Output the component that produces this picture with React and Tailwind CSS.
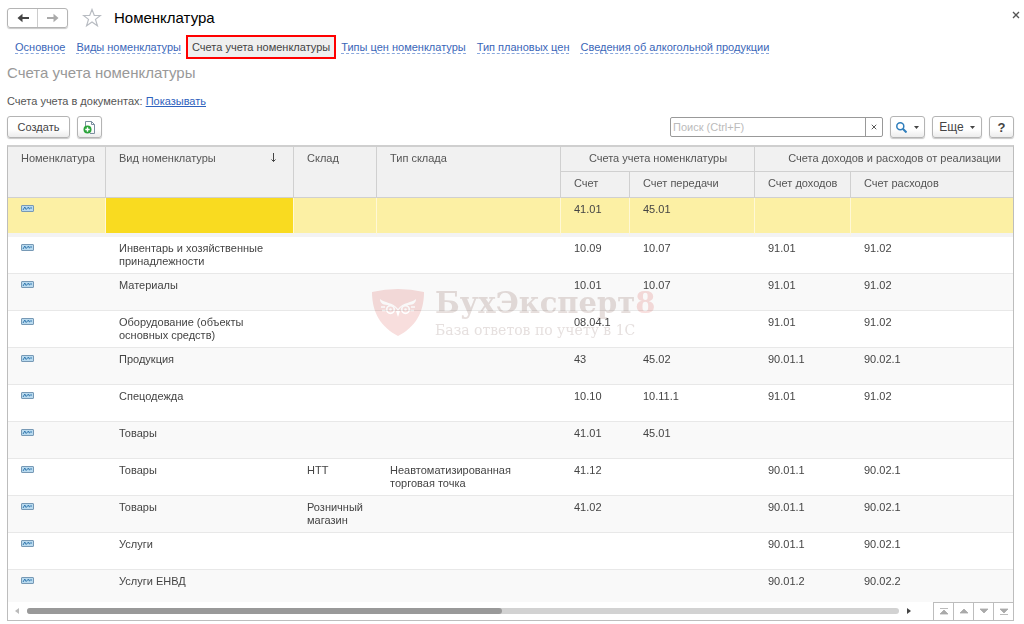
import React from "react";

const tabs = [
  { label: "Основное" },
  { label: "Виды номенклатуры" },
  { label: "Счета учета номенклатуры", active: true },
  { label: "Типы цен номенклатуры" },
  { label: "Тип плановых цен" },
  { label: "Сведения об алкогольной продукции" },
];

const rows = [
  ["", "", "", "41.01", "45.01", "", ""],
  ["Инвентарь и хозяйственные принадлежности", "", "", "10.09", "10.07", "91.01", "91.02"],
  ["Материалы", "", "", "10.01", "10.07", "91.01", "91.02"],
  ["Оборудование (объекты основных средств)", "", "", "08.04.1", "", "91.01", "91.02"],
  ["Продукция", "", "", "43", "45.02", "90.01.1", "90.02.1"],
  ["Спецодежда", "", "", "10.10", "10.11.1", "91.01", "91.02"],
  ["Товары", "", "", "41.01", "45.01", "", ""],
  ["Товары", "НТТ", "Неавтоматизированная торговая точка", "41.12", "", "90.01.1", "90.02.1"],
  ["Товары", "Розничный магазин", "", "41.02", "", "90.01.1", "90.02.1"],
  ["Услуги", "", "", "", "", "90.01.1", "90.02.1"],
  ["Услуги ЕНВД", "", "", "", "", "90.01.2", "90.02.2"],
];

const button =
  "flex h-[22px] items-center justify-center rounded-[3px] border border-[#b4b4b4] bg-linear-to-b from-white from-60% to-[#ececec] text-[#444] shadow-[0_1px_1px_rgba(0,0,0,0.22)]";

function Arrow({ left, color }) {
  return (
    <svg width="12" height="10" viewBox="0 0 12 10" fill={color} aria-hidden="true">
      {left ? <path d="M0.500 5L5.500 0.800v3.200H12v2H5.500v3.200z" /> : <path d="M11.500 5L6.500 0.800v3.200H0v2h6.500v3.200z" />}
    </svg>
  );
}

function Cross({ className }) {
  return (
    <svg viewBox="0 0 8 8" className={className} fill="none" stroke="currentColor" strokeWidth="1.3" aria-hidden="true">
      <path d="M1 1l6 6M7 1L1 7" />
    </svg>
  );
}

function Caret() {
  return (
    <svg width="5" height="3" viewBox="0 0 5 3" fill="#444" aria-hidden="true">
      <path d="M0 0h5L2.500 3z" />
    </svg>
  );
}

function RecordIcon() {
  return (
    <svg width="13" height="7" viewBox="0 0 13 7" fill="none" className="mt-[2px] block" aria-hidden="true">
      <rect x="0.500" y="0.500" width="12" height="6" rx="0.500" fill="#b9daef" stroke="#7799b5" />
      <path d="M2 5l1.800-3 1.400 2.500L7.500 2l.8 2L9.500 3H11" stroke="#3479ae" />
    </svg>
  );
}

function Watermark() {
  return (
    <div className="pointer-events-none absolute top-[142px] left-[364px] flex gap-[11px] mix-blend-multiply" aria-hidden="true">
      <svg width="52" height="47" viewBox="0 0 52 47" fill="none">
        <path d="M0 3Q26-3 52 3C52 24 43 38 26 47C9 38 0 24 0 3z" fill="#f8dedd" />
        <path d="M8 10c4 4 13 3 18 10 5-7 14-6 18-10 0 5-4 6-9 6-4 0-6 2-9 6-3-4-5-6-9-6-5 0-9-1-9-6z" fill="#fff" />
        <path d="M9 18h4M10 21.500h3.500M43 18h-4M42 21.500h-3.500" stroke="#fff" strokeWidth="1.400" />
        <circle cx="18.500" cy="20.500" r="3.800" fill="#f8dedd" stroke="#fff" strokeWidth="1.700" />
        <circle cx="33.500" cy="20.500" r="3.800" fill="#f8dedd" stroke="#fff" strokeWidth="1.700" />
        <circle cx="18.500" cy="20.500" r="1.300" fill="#fff" />
        <circle cx="33.500" cy="20.500" r="1.300" fill="#fff" />
        <path d="M24 22h4l-2 6z" fill="#fff" />
      </svg>
      <div className="font-['DejaVu_Serif',serif] whitespace-nowrap">
        <div className="text-[29px] leading-[29px] font-bold text-[#e6dedc]">
          БухЭксперт<span className="text-[#f8dedd]">8</span>
        </div>
        <div className="mt-1 text-[14px] leading-[16px] text-[#e6e0df]">База ответов по учету в 1С</div>
      </div>
    </div>
  );
}

const headBase = "border-b border-[#d0d0d0] pt-[5px] pr-3 pl-[13px] align-top font-normal whitespace-nowrap";
const headCell = headBase + " border-r text-left";

function AccountsTable() {
  return (
    <table className="w-full table-fixed border-separate border-spacing-0 text-[11px] leading-[13px] text-[#444]">
      <colgroup>
        <col className="w-[98px]" />
        <col className="w-[188px]" />
        <col className="w-[83px]" />
        <col className="w-[184px]" />
        <col className="w-[69px]" />
        <col className="w-[125px]" />
        <col className="w-[96px]" />
        <col />
      </colgroup>
      <thead className="bg-[#f1f1f1] text-[#555]">
        <tr className="h-[25px]">
          <th rowSpan={2} className={headCell}>Номенклатура</th>
          <th rowSpan={2} className={headCell}>
            <div className="flex justify-between pr-1">
              Вид номенклатуры
              <svg width="7" height="10" viewBox="0 0 7 10" fill="none" stroke="#444" className="mt-px" role="img" aria-label="По возрастанию">
                <path d="M3.500 0v8.500M1.500 6.500l2 2 2-2" />
              </svg>
            </div>
          </th>
          <th rowSpan={2} className={headCell}>Склад</th>
          <th rowSpan={2} className={headCell}>Тип склада</th>
          <th colSpan={2} className={headBase + " border-r text-center"}>Счета учета номенклатуры</th>
          <th colSpan={2} className={headBase + " text-right"}>
            Счета доходов и расходов от реализации
          </th>
        </tr>
        <tr className="h-[26px]">
          <th className={headCell}>Счет</th>
          <th className={headCell}>Счет передачи</th>
          <th className={headCell}>Счет доходов</th>
          <th className={headBase + " text-left"}>Счет расходов</th>
        </tr>
      </thead>
      <tbody>
        {rows.map((row, i) =>
          i === 0 ? (
            <tr key={i} className="h-[39px] bg-[#fcf0a4]">
              <td className="border-r border-b-4 border-r-[#fff8d5] border-b-[#f3f3f3] px-[13px] pt-[5px] align-top"><RecordIcon /></td>
              {row.map((cell, j) => (
                <td
                  key={j}
                  className={
                    "border-r border-b-4 border-r-[#fff8d5] border-b-[#f3f3f3] px-[13px] pt-[5px] align-top last:border-r-0" +
                    (j === 0 ? " bg-[#f9db20]" : "")
                  }
                >
                  {cell}
                </td>
              ))}
            </tr>
          ) : (
            <tr key={i} className="h-[37px] even:bg-white odd:bg-[#f9f9f9]">
              <td className="border-b border-[#e8e8e8] px-[13px] pt-[5px] align-top"><RecordIcon /></td>
              {row.map((cell, j) => (
                <td key={j} className="border-b border-[#e8e8e8] px-[13px] pt-[5px] align-top">{cell}</td>
              ))}
            </tr>
          )
        )}
      </tbody>
    </table>
  );
}

const pagers = [
  { label: "В начало", d: "M1 0.500h8M1 6l4-4 4 4z" },
  { label: "Вверх", d: "M1 5l4-4 4 4z" },
  { label: "Вниз", d: "M1 1l4 4 4-4z" },
  { label: "В конец", d: "M1 1l4 4 4-4zM1 6.500h8" },
];

export default function App() {
  return (
    <main className="min-h-screen bg-white pt-[7px] pr-[10px] pb-[3px] pl-[7px] font-['Liberation_Sans',Arial,sans-serif] text-[11px] leading-[13px] text-[#555]">
      <header className="flex h-[22px] items-center">
        <div className="flex h-5 w-[61px] rounded-[3px] border border-[#b4b4b4] shadow-[0_1px_1px_rgba(0,0,0,0.22)]">
          <button aria-label="Назад" className="flex flex-1 items-center justify-center border-r border-[#ccc]">
            <Arrow left color="#444" />
          </button>
          <button aria-label="Вперед" className="flex flex-1 items-center justify-center">
            <Arrow color="#aaa" />
          </button>
        </div>
        <button aria-label="В избранное" className="ml-[14px]">
          <svg width="20" height="20" viewBox="0 0 20 20" fill="none" stroke="#b8bcc2" strokeWidth="1.200" className="block">
            <path d="M10 1.500l2.300 6h6.200l-5 3.900 1.900 6.300L10 14l-5.400 3.700 1.900-6.300-5-3.900h6.200z" />
          </svg>
        </button>
        <h1 className="ml-3 text-[15px] leading-[20px] text-black">Номенклатура</h1>
        <button aria-label="Закрыть" className="-mr-[6px] mb-[6px] ml-auto text-[#555]">
          <Cross className="block size-2" />
        </button>
      </header>

      <nav className="mt-[6px] flex h-6 items-center gap-[11px] pl-2">
        {tabs.map((tab) =>
          tab.active ? (
            <a key={tab.label} href="#" aria-current="page" className="-mx-[6px] flex h-6 items-center border-2 border-[#ff0000] bg-[#efefef] px-1 text-[#444]">
              {tab.label}
            </a>
          ) : (
            <a key={tab.label} href="#" className="border-b border-dashed border-[#8aa8dd] leading-[12px] text-[#3a66b8]">
              {tab.label}
            </a>
          )
        )}
      </nav>

      <h2 className="mt-[5px] text-[15px] leading-[18px] text-[#999]">Счета учета номенклатуры</h2>
      <p className="mt-[13px]">
        Счета учета в документах:{" "}
        <a href="#" className="text-[#2f62bd] underline">Показывать</a>
      </p>

      <div className="mt-2 flex items-center gap-[7px]">
        <button className={button + " w-[63px]"}>Создать</button>
        <button aria-label="Создать копированием" className={button + " w-[25px]"}>
          <svg width="13" height="13" viewBox="0 0 13 13" fill="none" aria-hidden="true">
            <path d="M2.500 6V0.500h6l3 3v9H7M8.500 0.500v3h3" stroke="#7b8fa0" />
            <circle cx="4.500" cy="8.500" r="4" fill="#2aa33a" />
            <path d="M4.500 6.300v4.400M2.300 8.500h4.400" stroke="#fff" strokeWidth="1.400" />
          </svg>
        </button>
        <div className="ml-auto flex h-5 w-[213px] rounded-[2px] border border-[#999]">
          <input
            type="text"
            aria-label="Поиск"
            placeholder="Поиск (Ctrl+F)"
            className="min-w-0 flex-1 bg-transparent px-[2px] outline-none placeholder:text-[#bbb]"
          />
          <button aria-label="Очистить" className="flex w-[17px] items-center justify-center border-l border-[#999]">
            <Cross className="size-[6px]" />
          </button>
        </div>
        <button aria-label="Найти" className={button + " w-[35px] gap-[7px]"}>
          <svg width="11" height="11" viewBox="0 0 11 11" fill="none" stroke="#2f7ebc" strokeWidth="1.500" aria-hidden="true">
            <circle cx="4.300" cy="4.300" r="3.500" />
            <path d="M6.800 6.800l3.700 3.700" strokeWidth="2" />
          </svg>
          <Caret />
        </button>
        <button className={button + " w-[50px] gap-[6px] text-[12px]"}>
          Еще
          <Caret />
        </button>
        <button aria-label="Справка" className={button + " w-[25px] text-[13px] font-bold"}>?</button>
      </div>

      <section className="relative isolate mt-[7px] border border-t-2 border-[#bdbdbd] border-t-[#cfcfcf] bg-white">
        <div className="h-[455px] overflow-hidden">
          <AccountsTable />
        </div>
        <Watermark />
        <div className="flex h-[18px] items-stretch">
          <div className="flex flex-1 items-center gap-2 pr-[22px] pl-[7px]">
            <svg width="4" height="6" viewBox="0 0 4 6" fill="#bbb" aria-hidden="true"><path d="M4 0v6L0 3z" /></svg>
            <div className="h-[6px] flex-1 rounded-full bg-[#d2d2d2]">
              <div className="h-full w-[54.5%] rounded-full bg-[#999]" />
            </div>
            <svg width="4" height="6" viewBox="0 0 4 6" fill="#444" aria-hidden="true"><path d="M0 0v6l4-3z" /></svg>
          </div>
          <div className="flex border-t border-[#bdbdbd]">
            {pagers.map((p) => (
              <button key={p.label} aria-label={p.label} className="flex w-5 items-center justify-center border-l border-[#bdbdbd]">
                <svg width="10" height="7" viewBox="0 0 10 7" fill="#aaa" stroke="#aaa" strokeWidth="0.800" aria-hidden="true"><path d={p.d} /></svg>
              </button>
            ))}
          </div>
        </div>
      </section>
    </main>
  );
}
